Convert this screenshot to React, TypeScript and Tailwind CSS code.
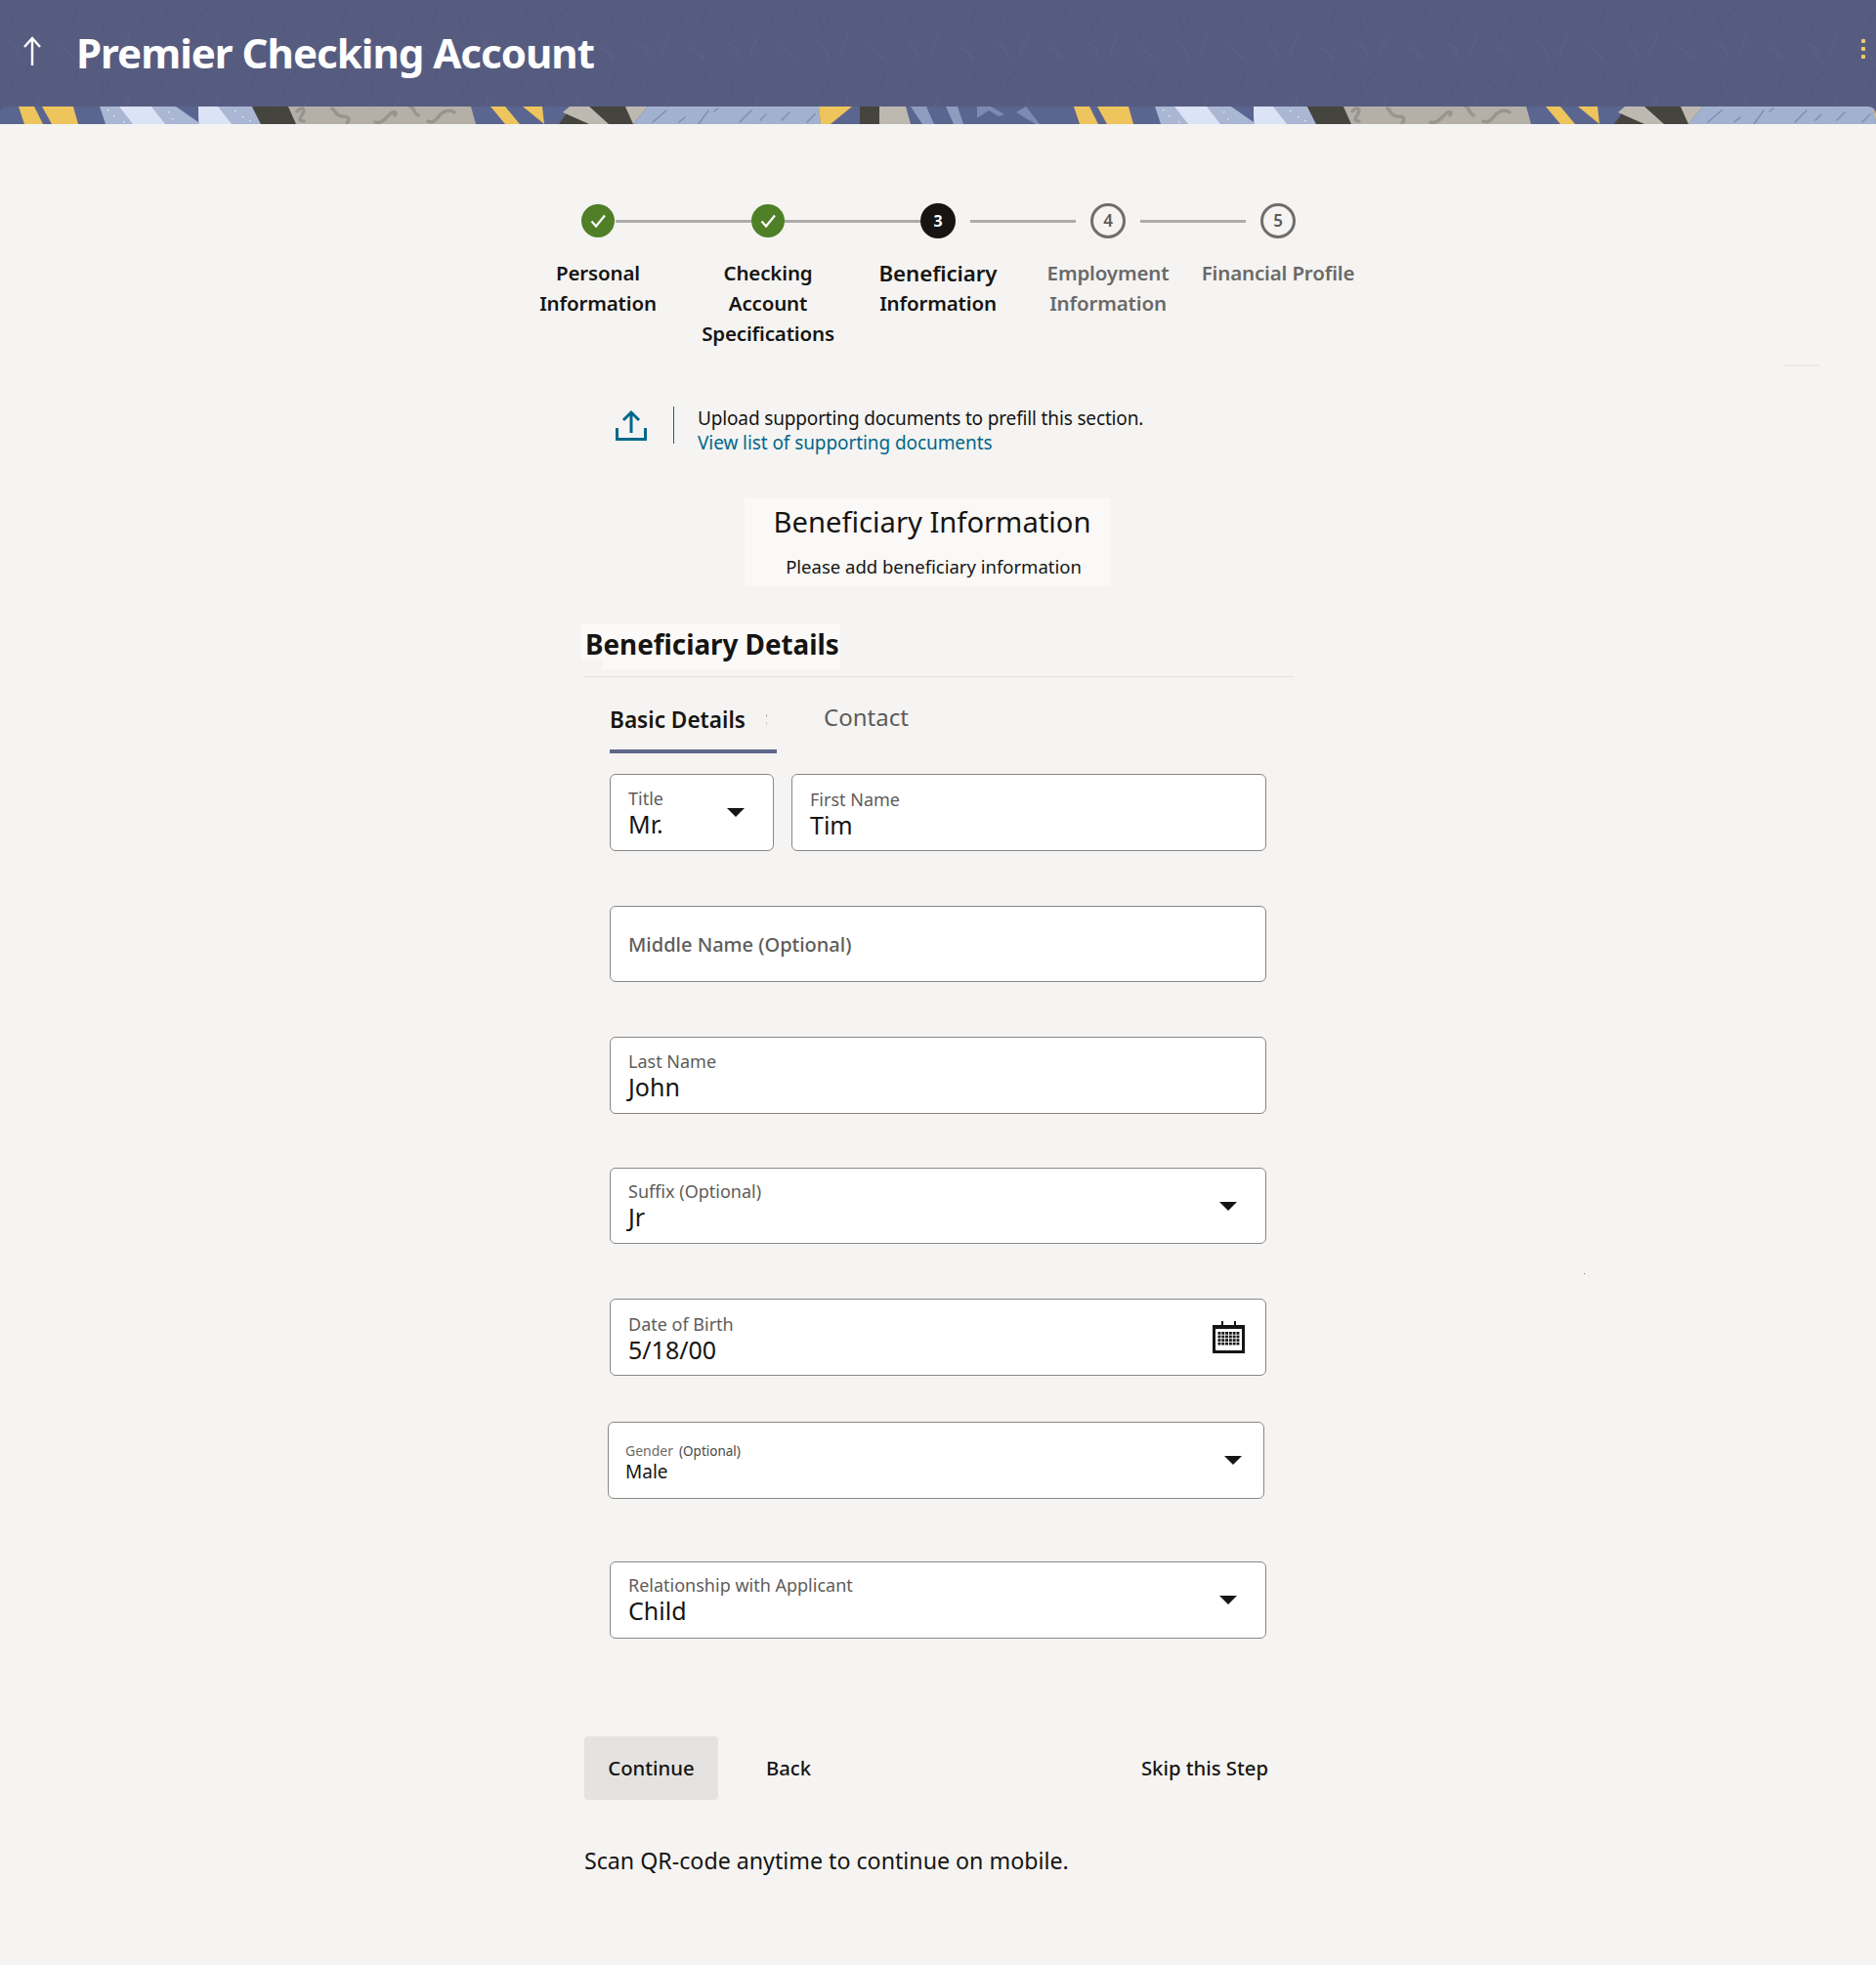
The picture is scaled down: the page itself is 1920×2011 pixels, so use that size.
import type { ReactNode } from "react";

const steps = [
  { label: ["Personal", "Information"], state: "done" },
  { label: ["Checking", "Account", "Specifications"], state: "done" },
  { label: ["Beneficiary", "Information"], state: "current", n: 3 },
  { label: ["Employment", "Information"], state: "todo", n: 4 },
  { label: ["Financial Profile"], state: "todo", n: 5 },
];

function Caret() {
  return <span className="h-0 w-0 shrink-0 border-x-[9px] border-t-[9px] border-x-transparent border-t-[#161513]" />;
}

function Calendar() {
  const cells: ReactNode[] = [];
  for (let r = 0; r < 4; r++) {
    for (let c = 0; c < 6; c++) {
      cells.push(<rect key={`${r}-${c}`} x={5.5 + c * 3.8} y={11 + r * 3.6} width="2.9" height="2.7" />);
    }
  }
  return (
    <svg viewBox="0 0 33 33" className="h-[33px] w-[33px] shrink-0" fill="#161513">
      <path d="M1.5 5.5h30v26h-30z" fill="none" stroke="#161513" strokeWidth="3" />
      <path d="M1 7h31" stroke="#161513" strokeWidth="2" />
      <rect x="9" y="0" width="2" height="7" />
      <rect x="22" y="0" width="2" height="7" />
      {cells}
    </svg>
  );
}

function Field({
  label,
  value,
  icon,
  className = "",
  pr = "pr-[29px]",
  pt = "pt-[13px]",
  h = "h-[78px]",
}: {
  label: string;
  value?: string;
  icon?: ReactNode;
  className?: string;
  pr?: string;
  pt?: string;
  h?: string;
}) {
  return (
    <div className={`flex items-center justify-between rounded-[6px] border border-[#8a8886] bg-white pl-[18px] ${h} ${pr} ${className}`}>
      {value ? (
        <div className={`self-start ${pt}`}>
          <div className="text-[18px] leading-[22px] text-[#5e5c5a]">{label}</div>
          <div className="text-[25px] leading-[30px] text-[#161513]">{value}</div>
        </div>
      ) : (
        <div className="mt-[2px] text-[20px] font-medium text-[#5e5c5a]">{label}</div>
      )}
      {icon}
    </div>
  );
}

function StripShapes() {
  return (
    <g>
      {/* yellow bands */}
      <path d="M19 0h16l9 18H25z" fill="#eec45c" />
      <path d="M43 0h32l5 18H53z" fill="#eec45c" />
      {/* light blue block with white bands */}
      <path d="M102 0h156l9 18H108z" fill="#a9b6d4" />
      <path d="M122 0h33l14 18h-33z" fill="#dbe3f6" />
      <path d="M202 0h21l14 18h-33z" fill="#dbe3f6" />
      <path d="M180 0h23v16z" fill="#59658f" />
      {[[110, 3], [116, 9], [172, 5], [176, 12], [240, 4], [248, 10], [255, 14], [126, 15]].map(([x, y]) => (
        <rect key={`${x}-${y}`} x={x} y={y} width="1.4" height="1.4" fill="#f1eddc" />
      ))}
      {/* dark then grey squiggle */}
      <path d="M258 0h37l8 18h-36z" fill="#45443f" />
      <path d="M295 0h187l5 18H303z" fill="#b4b0a8" />
      <g fill="none" stroke="#98958e" strokeWidth="3.5" strokeLinecap="round">
        <path d="M304 5c4-5 9-3 6 2s-5 8 1 8" />
        <path d="M340 2c4 3 4 8 10 8s9 2 5 7" />
        <path d="M384 16c5 2 9-2 14-7s9-4 6 0" />
        <path d="M420 0c6 3 2 6 8 9" />
        <path d="M438 15c6 3 9-3 13-7s10-5 14-2" />
      </g>
      {/* yellow pair, dark with pale stripes */}
      <path d="M502 0h15l15 18h-15z" fill="#eec45c" />
      <path d="M535 0h20l2 18z" fill="#eec45c" />
      <path d="M585 0h78l-15 18h-76z" fill="#45443f" />
      <path d="M583 0h20l20 18h-20l-27-12z" fill="#bdb9b0" />
      <path d="M640 0h23l-15 18z" fill="#bdb9b0" />
      {/* pale blue hatch */}
      <path d="M663 0h175l2 18H648z" fill="#a3b1d0" />
      <g stroke="#7f8db3" strokeWidth="1.5" strokeLinecap="round">
        <path d="M668 16l14-12M695 16l6-5M715 18l10-14M735 2l-4 3M757 16l12-12M778 14l6-6M800 14l8-8M826 16l8-8" />
      </g>
      {/* yellow wedge, dark block, grey block */}
      <path d="M838 0h34l-22 18h-10z" fill="#eec45c" />
      <path d="M880 0h20v18h-20z" fill="#45443f" />
      <path d="M900 0h27l5 18h-32z" fill="#bdb9b0" />
      <path d="M932 0l12 18h12l-8-18zM968 0l8 18h10l-6-18z" fill="#8f9cbf" />
      <path d="M1000 0h14l14 8-6 2-10-6-12 8zM1040 6l10-6 14 18h-4z" fill="#7d8bb0" />
    </g>
  );
}

function Strip() {
  return (
    <div className="h-[18px] overflow-hidden rounded-t-[8px] bg-[#5a6590]">
      <svg width="2160" height="18" viewBox="0 0 2160 18" className="block max-w-none">
        <StripShapes />
        <g transform="translate(1080 0)">
          <StripShapes />
        </g>
      </svg>
    </div>
  );
}

function Connector({ w, className = "" }: { w: string; className?: string }) {
  return <span className={`h-[3px] bg-[#aeaca9] ${w} ${className}`} />;
}

function StepDot({ state, n }: { state: string; n?: number }) {
  if (state === "done") {
    return (
      <span className="flex h-[34px] w-[34px] shrink-0 items-center justify-center rounded-full bg-[#4f7f26]">
        <svg viewBox="0 0 20 20" className="h-[20px] w-[20px]" fill="none" stroke="#fff" strokeWidth="2.2">
          <path d="M3.5 10.5l4.5 5 9-11" />
        </svg>
      </span>
    );
  }
  if (state === "current") {
    return (
      <span className="flex h-[36px] w-[36px] shrink-0 items-center justify-center rounded-full bg-[#161513] text-[16px] font-bold text-white">
        {n}
      </span>
    );
  }
  return (
    <span className="flex h-[36px] w-[36px] shrink-0 items-center justify-center rounded-full border-[3px] border-[#6f6e6c] text-[17px] font-semibold text-[#5e5c5a]">
      {n}
    </span>
  );
}

export default function App() {
  return (
    <div className="relative min-h-[2011px] overflow-hidden bg-[#f5f4f2] font-['Noto_Sans','Liberation_Sans',sans-serif] text-[#161513]">
      <header className="relative h-[127px] bg-[#565c80]">
        <svg className="absolute inset-0 h-[109px] w-full" aria-hidden>
          <defs>
            <pattern id="leaf" width="92" height="64" patternUnits="userSpaceOnUse">
              <g fill="none" strokeWidth="2" strokeLinecap="round">
                <path d="M6 10c6 8 8 14 8 22M30 4c-4 8-10 12-12 20M52 18c4 8 10 12 12 20M80 8c-4 6-4 14-10 20" stroke="#515778" />
                <path d="M10 44c6 4 10 10 10 16M40 36c-2 8-6 12-8 20M62 48c6 2 10 8 14 12" stroke="#5d6387" />
              </g>
            </pattern>
          </defs>
          <rect width="100%" height="100%" fill="url(#leaf)" opacity="0.55" />
        </svg>
        <div className="relative flex h-[109px] items-center justify-between pl-[24px] pr-[11px] text-white">
          <div className="flex items-center">
            <svg viewBox="0 0 18 30" className="mb-[6px] h-[30px] w-[18px]" fill="none" stroke="#fff" strokeWidth="2.4">
              <path d="M9 2v28M1 11l8-9 8 9" />
            </svg>
            <h1 className="mb-[3px] ml-[36px] text-[42px] font-bold tracking-[-0.97px]">Premier Checking Account</h1>
          </div>
          <div className="mb-[9px] flex flex-col gap-[4px]">
            <span className="h-[4px] w-[4px] rounded-[1px] bg-[#f0cc71]" />
            <span className="h-[4px] w-[4px] rounded-[1px] bg-[#f0cc71]" />
            <span className="h-[4px] w-[4px] rounded-[1px] bg-[#f0cc71]" />
          </div>
        </div>
        <Strip />
      </header>

      <div className="mx-auto mt-[81px] w-[870px]">
        <div className="flex h-[36px] items-center pl-[70px]">
          <StepDot state="done" />
          <Connector w="w-[139px]" className="ml-px" />
          <StepDot state="done" />
          <Connector w="w-[139px]" />
          <StepDot state="current" n={3} />
          <Connector w="w-[108px]" className="ml-[15px]" />
          <span className="ml-[15px]">
            <StepDot state="todo" n={4} />
          </span>
          <Connector w="w-[108px]" className="ml-[15px]" />
          <span className="ml-[15px]">
            <StepDot state="todo" n={5} />
          </span>
        </div>
        <div className="mt-[20px] flex">
          {steps.map((s) => (
            <div
              key={s.label[0]}
              className={`w-[174px] whitespace-nowrap text-center text-[20.5px] font-semibold leading-[31px] tracking-[-0.15px] ${
                s.state === "todo" ? "text-[#6b6967]" : "text-[#161513]"
              }`}
            >
              {s.label.map((l) => (
                <div key={l} className={l === "Beneficiary" ? "text-[22.3px] tracking-[-0.1px]" : ""}>
                  {l}
                </div>
              ))}
            </div>
          ))}
        </div>
      </div>

      <main className="mx-auto w-[724px]">
        <div className="mt-[59px] flex items-start pl-[32px]">
          <svg viewBox="0 0 32 32" className="mt-[3px] h-[32px] w-[32px]" fill="none" stroke="#00688c" strokeWidth="3">
            <path d="M16 3v21M8 11l8-8 8 8" />
            <path d="M1.5 19v11.5h29V19" />
          </svg>
          <span className="ml-[27px] h-[38px] w-px bg-[#00688c]" />
          <div className="ml-[24px] text-[19px] leading-[25px] tracking-[-0.15px]">
            <div>Upload supporting documents to prefill this section.</div>
            <div className="tracking-[-0.08px] text-[#00688c]">View list of supporting documents</div>
          </div>
        </div>

        <div className="ml-[164px] mt-[44px] h-[90px] w-[374px] whitespace-nowrap bg-[#faf9f7] pl-[29px] pr-[19px] pt-[4px] text-center">
          <div className="text-[29.2px] leading-[40px]">Beneficiary Information</div>
          <div className="mt-[11px] pl-[3px] text-[18.5px] leading-[30px]">Please add beneficiary information</div>
        </div>

        <div className="ml-[-3px] mt-[39px]">
          <div className="h-[36px] w-[265px] whitespace-nowrap bg-[#fbfaf8] pl-[4px] text-[27.8px] font-bold leading-[40px]">
            Beneficiary Details
          </div>
          <div className="ml-[22px] h-[10px] w-[243px] bg-[#fbfaf8]" />
        </div>
        <div className="mt-[7px] w-[726px] border-t border-[#e3e2df]" />

        <div className="ml-[26px]">
          <div className="flex">
            <div className="relative h-[78px] w-[171px] whitespace-nowrap border-b-4 border-[#5f6688] pt-[29px] text-[22.6px] font-semibold leading-[30px]">
              Basic Details
              <span className="absolute left-[160px] top-[38px] h-[3px] w-px bg-[#b5b3b0]" />
              <span className="absolute left-[160px] top-[46px] h-[3px] w-px bg-[#d0cecb]" />
            </div>
            <div className="ml-[48px] pt-[26px] text-[24px] leading-[30px] text-[#5e5c5a]">Contact</div>
          </div>

          <div className="mt-[21px] flex gap-[18px]">
            <Field className="w-[168px]" h="h-[79px]" label="Title" value="Mr." icon={<Caret />} />
            <Field className="w-[486px]" h="h-[79px]" pt="pt-[14px]" label="First Name" value="Tim" />
          </div>
          <Field className="mt-[56px] w-[672px]" label="Middle Name (Optional)" />
          <Field className="mt-[56px] w-[672px]" h="h-[79px]" label="Last Name" value="John" />
          <Field className="mt-[55px] w-[672px]" pt="pt-[12px]" label="Suffix (Optional)" value="Jr" icon={<Caret />} />
          <Field
            className="mt-[56px] w-[672px]"
            h="h-[79px]"
            pr="pr-[21px]"
            pt="pt-[14px]"
            label="Date of Birth"
            value="5/18/00"
            icon={<Calendar />}
          />

          <div className="ml-[-2px] mt-[47px] flex h-[79px] w-[672px] items-center justify-between rounded-[6px] border border-[#8a8886] bg-white pl-[17px] pr-[22px]">
            <div className="self-start pt-[20px]">
              <div className="flex gap-[6px] text-[14px] leading-[18px]">
                <span className="text-[#6b6967]">Gender</span>
                <span className="text-[13.5px] text-[#4a4947]">(Optional)</span>
              </div>
              <div className="text-[19px] leading-[24px]">Male</div>
            </div>
            <Caret />
          </div>

          <Field className="mt-[64px] w-[672px]" h="h-[79px]" pt="pt-[12px]" label="Relationship with Applicant" value="Child" icon={<Caret />} />
        </div>

        <div className="mt-[100px] flex w-[700px] items-center text-[20.3px] font-medium">
          <button className="h-[65px] w-[137px] rounded-[4px] bg-[#e4e3e1]">Continue</button>
          <span className="ml-[49px]">Back</span>
          <span className="ml-auto">Skip this Step</span>
        </div>
        <p className="mt-[46px] text-[23.2px] leading-[32px]">Scan QR-code anytime to continue on mobile.</p>
      </main>

      {/* stray marks baked into the capture */}
      <span className="absolute left-[1826px] top-[373px] h-[2px] w-[36px] rounded-full bg-[#eae9e6]" />
      <span className="absolute left-[1621px] top-[1303px] h-px w-px bg-[#6b6967]" />
    </div>
  );
}
